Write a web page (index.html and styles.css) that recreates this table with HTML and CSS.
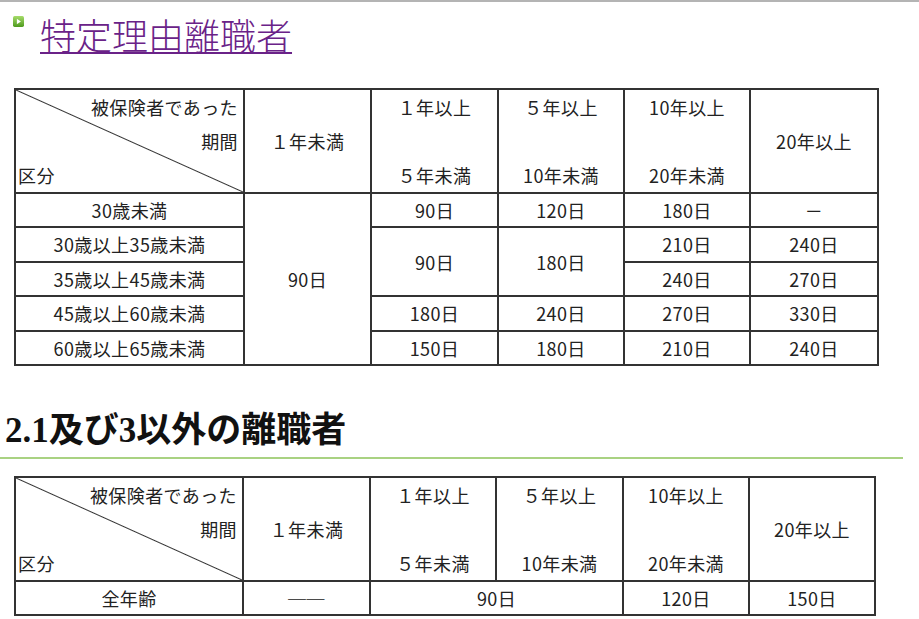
FILE: index.html
```html
<!DOCTYPE html>
<html lang="ja">
<head>
<meta charset="utf-8">
<link rel="stylesheet" href="styles.css">
</head>
<body>
<div class="page">
  <div class="topline"></div>
  <div class="title-row">
    <span class="bullet"><svg width="11" height="11" viewBox="0 0 10 10"><defs><linearGradient id="g" x1="0" y1="0" x2="0" y2="1"><stop offset="0" stop-color="#a6dc6a"/><stop offset="1" stop-color="#4e9a1e"/></linearGradient></defs><rect x="0" y="0" width="10" height="10" rx="1.5" fill="url(#g)"/><path d="M3.5 2.5 L7.2 5 L3.5 7.5 Z" fill="#fff"/></svg></span>
    <a class="title" href="#">特定理由離職者</a>
  </div>

  <table class="t t1">
    <colgroup>
      <col class="c0"><col class="c1"><col class="c2"><col class="c3"><col class="c4"><col class="c5">
    </colgroup>
    <tr class="hdr">
      <td class="diag">
        <div class="dl r">被保険者であった</div>
        <div class="dl r">期間</div>
        <div class="dl l">区分</div>
      </td>
      <td>１年未満</td>
      <td>１年以上<br><br>５年未満</td>
      <td>５年以上<br><br>10年未満</td>
      <td>10年以上<br><br>20年未満</td>
      <td>20年以上</td>
    </tr>
    <tr class="row">
      <td>30歳未満</td>
      <td rowspan="5">90日</td>
      <td>90日</td>
      <td>120日</td>
      <td>180日</td>
      <td>－</td>
    </tr>
    <tr class="row">
      <td>30歳以上35歳未満</td>
      <td rowspan="2">90日</td>
      <td rowspan="2">180日</td>
      <td>210日</td>
      <td>240日</td>
    </tr>
    <tr class="row">
      <td>35歳以上45歳未満</td>
      <td>240日</td>
      <td>270日</td>
    </tr>
    <tr class="row">
      <td>45歳以上60歳未満</td>
      <td>180日</td>
      <td>240日</td>
      <td>270日</td>
      <td>330日</td>
    </tr>
    <tr class="row">
      <td>60歳以上65歳未満</td>
      <td>150日</td>
      <td>180日</td>
      <td>210日</td>
      <td>240日</td>
    </tr>
  </table>

  <h2 class="sec">2.1及び3以外の離職者</h2>

  <table class="t t2">
    <colgroup>
      <col class="d0"><col class="d1"><col class="d2"><col class="d3"><col class="d4"><col class="d5">
    </colgroup>
    <tr class="hdr">
      <td class="diag">
        <div class="dl r">被保険者であった</div>
        <div class="dl r">期間</div>
        <div class="dl l">区分</div>
      </td>
      <td>１年未満</td>
      <td>１年以上<br><br>５年未満</td>
      <td>５年以上<br><br>10年未満</td>
      <td>10年以上<br><br>20年未満</td>
      <td>20年以上</td>
    </tr>
    <tr class="row">
      <td>全年齢</td>
      <td>──</td>
      <td colspan="2">90日</td>
      <td>120日</td>
      <td>150日</td>
    </tr>
  </table>
</div>
</body>
</html>
```

FILE: styles.css
```css
html, body {
  margin: 0;
  padding: 0;
  background: #fff;
}
.page {
  width: 919px;
  min-height: 619px;
  position: relative;
}
.topline {
  height: 2px;
  background: #b4b4b4;
}
.title-row {
  display: flex;
  align-items: flex-start;
  height: 46px;
  margin-top: 12px;
  margin-left: 13px;
}
.bullet {
  display: block;
  width: 11px;
  height: 11px;
  margin-top: 2px;
  margin-right: 16px;
}
.bullet svg {
  display: block;
}
.title {
  font-family: "Noto Sans CJK JP", sans-serif;
  font-weight: 300;
  font-size: 36px;
  line-height: 40px;
  color: #6a2288;
  text-decoration: underline;
  text-decoration-thickness: 2px;
  text-underline-offset: 2px;
}
.t {
  border-collapse: collapse;
  table-layout: fixed;
  font-family: "Noto Sans CJK JP", sans-serif;
  font-size: 18px;
  letter-spacing: 0.4px;
  color: #222;
  text-align: center;
}
.t td {
  border: 2px solid #333;
  padding: 0;
  vertical-align: middle;
  line-height: 34px;
  white-space: nowrap;
  overflow: hidden;
}
.t .row td {
  line-height: 32.4px;
}
.t1 {
  margin: 28px 0 0 14px;
  width: 863px;
}
.c0 { width: 229px; }
.c1 { width: 127px; }
.c2 { width: 127px; }
.c3 { width: 126px; }
.c4 { width: 126px; }
.c5 { width: 128px; }
.t2 {
  margin: 17px 0 0 14px;
  width: 860px;
}
.d0 { width: 228px; }
.d1 { width: 127px; }
.d2 { width: 126px; }
.d3 { width: 127px; }
.d4 { width: 126px; }
.d5 { width: 126px; }
.hdr {
  height: 102px;
}
.diag {
  background: linear-gradient(to top right, transparent calc(50% - 1px), #333 50%, transparent calc(50% + 1px));
}
.dl {
  line-height: 34px;
}
.dl.r {
  text-align: right;
  padding-right: 5px;
}
.dl.l {
  text-align: left;
  padding-left: 2px;
}
.sec {
  margin: 42px 16px 0 0;
  padding: 0 0 3px 5px;
  border-bottom: 2px solid #a9d282;
  font-family: "Liberation Serif", "Noto Sans CJK JP", serif;
  font-weight: 700;
  font-size: 35px;
  line-height: 46px;
  color: #111;
}
```
